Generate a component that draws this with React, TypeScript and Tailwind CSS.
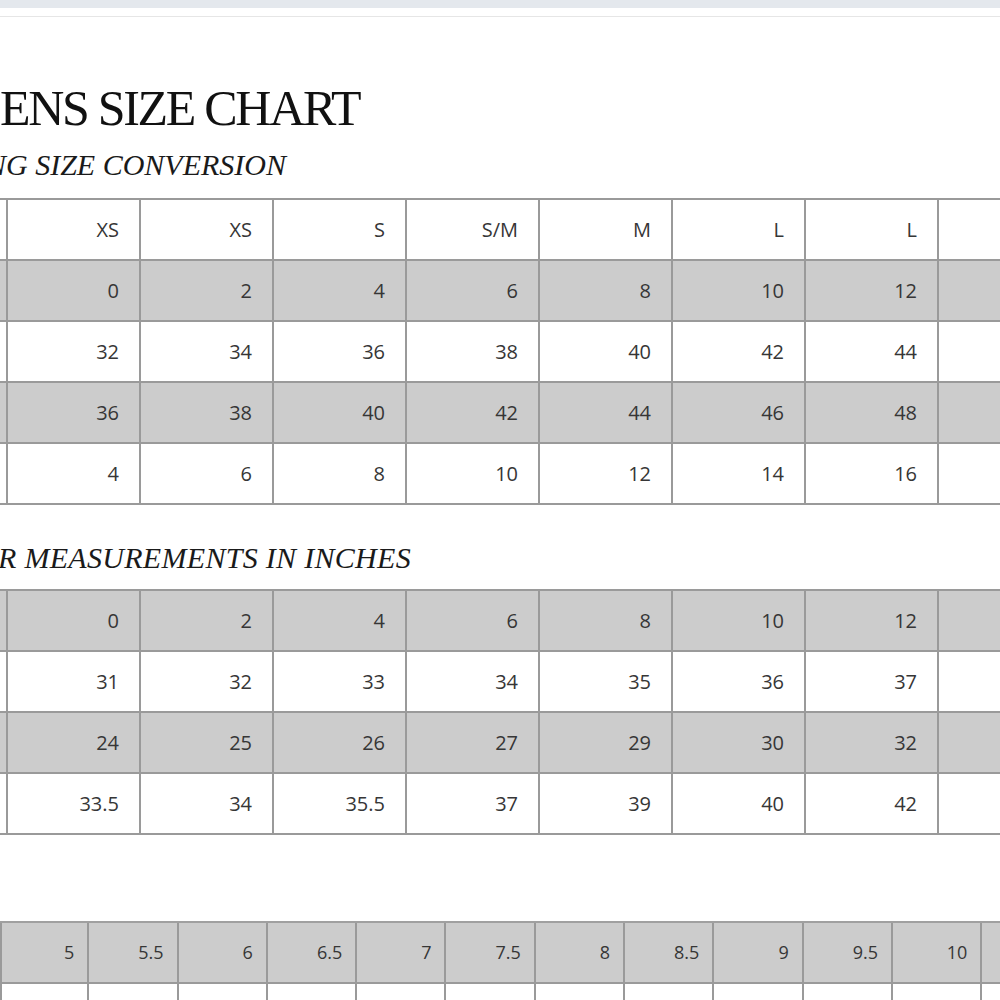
import React from "react";

type Row = { gray: boolean; cells: string[] };

const t1: Row[] = [
  { gray: false, cells: ["XS", "XS", "S", "S/M", "M", "L", "L", ""] },
  { gray: true, cells: ["0", "2", "4", "6", "8", "10", "12", ""] },
  { gray: false, cells: ["32", "34", "36", "38", "40", "42", "44", ""] },
  { gray: true, cells: ["36", "38", "40", "42", "44", "46", "48", ""] },
  { gray: false, cells: ["4", "6", "8", "10", "12", "14", "16", ""] },
];

const t2: Row[] = [
  { gray: true, cells: ["0", "2", "4", "6", "8", "10", "12", ""] },
  { gray: false, cells: ["31", "32", "33", "34", "35", "36", "37", ""] },
  { gray: true, cells: ["24", "25", "26", "27", "29", "30", "32", ""] },
  { gray: false, cells: ["33.5", "34", "35.5", "37", "39", "40", "42", ""] },
];

const t3: Row[] = [
  { gray: true, cells: ["5", "5.5", "6", "6.5", "7", "7.5", "8", "8.5", "9", "9.5", "10", ""] },
  { gray: false, cells: ["", "", "", "", "", "", "", "", "", "", "", ""] },
];

function WideTable({ rows }: { rows: Row[] }) {
  return (
    <div className="w-[1200px] border-t-2 border-[#9a9a9a]">
      {rows.map((r, i) => (
        <div
          key={i}
          className={`flex h-[61px] border-b-2 border-[#9a9a9a] ${r.gray ? "bg-[#cccccc]" : "bg-white"}`}
        >
          <div className="w-[8px] shrink-0 border-r-2 border-[#9a9a9a]" />
          {r.cells.map((c, j) => (
            <div
              key={j}
              className="w-[133px] shrink-0 border-r-2 border-[#9a9a9a] flex items-center justify-end pr-[20px] text-[20px] text-[#363636] font-['Open_Sans',sans-serif]"
            >
              {c}
            </div>
          ))}
        </div>
      ))}
    </div>
  );
}

function ShoeTable({ rows }: { rows: Row[] }) {
  return (
    <div className="w-[1200px] border-t-2 border-[#a0a0a0]">
      {rows.map((r, i) => (
        <div
          key={i}
          className={`flex h-[61px] border-b-2 border-[#9a9a9a] ${r.gray ? "bg-[#cccccc]" : "bg-white"}`}
        >
          {r.cells.map((c, j) => (
            <div
              key={j}
              className={`w-[89.3px] shrink-0 border-r-2 border-[#9a9a9a] flex items-center justify-end pr-[13px] text-[18px] text-[#363636] font-['Open_Sans',sans-serif] ${j === 0 ? "border-l-2" : ""}`}
            >
              {c}
            </div>
          ))}
        </div>
      ))}
    </div>
  );
}

export default function App() {
  return (
    <div className="w-[1000px] h-[1000px] overflow-hidden bg-white">
      <div className="h-[8px] bg-[#e4e8ed]" />
      <div className="h-[9px] border-b border-[#e6e6e6]" />
      <div className="mt-[66px] h-[50px] leading-[50px] text-[50px] tracking-[-2.3px] text-[#111111] font-['Liberation_Serif',serif] whitespace-nowrap">
        ENS SIZE CHART
      </div>
      <div className="mt-[17px] h-[30px] leading-[30px] text-[30px] italic text-[#1a1a1a] font-['Liberation_Serif',serif] whitespace-nowrap ml-[-14px]">
        NG SIZE CONVERSION
      </div>
      <div className="mt-[18px]">
        <WideTable rows={t1} />
      </div>
      <div className="mt-[38px] h-[30px] leading-[30px] text-[30px] italic tracking-[0.3px] text-[#1a1a1a] font-['Liberation_Serif',serif] whitespace-nowrap ml-[-2px]">
        R MEASUREMENTS IN INCHES
      </div>
      <div className="mt-[16px]">
        <WideTable rows={t2} />
      </div>
      <div className="mt-[86px]">
        <ShoeTable rows={t3} />
      </div>
    </div>
  );
}
